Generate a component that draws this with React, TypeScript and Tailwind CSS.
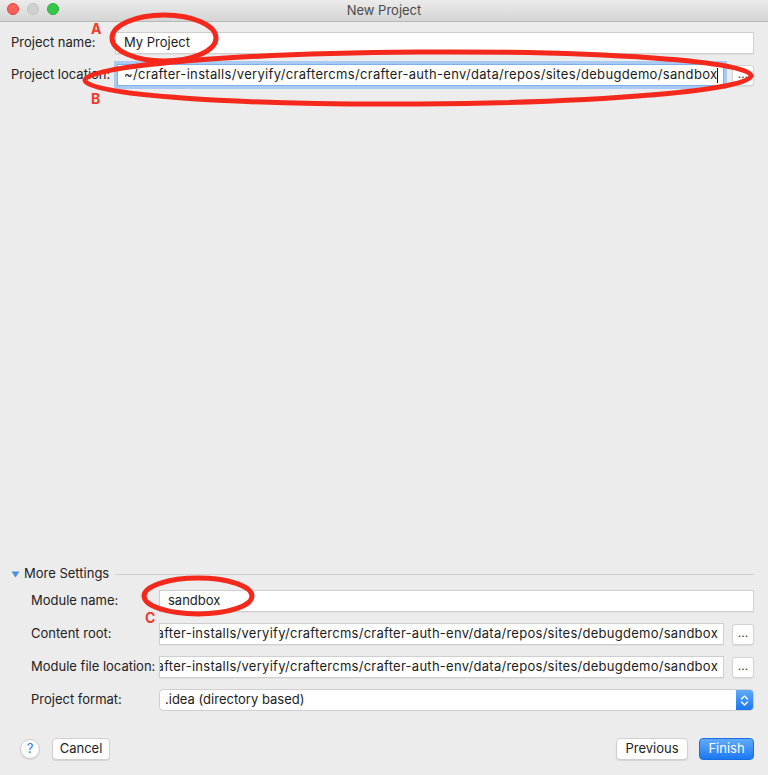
import React from 'react';

const font = { fontFamily: 'Inter, "Liberation Sans", Arial, sans-serif' };

const longPath = '~/crafter-installs/veryify/craftercms/crafter-auth-env/data/repos/sites/debugdemo/sandbox';

function Field({ value, clip = false }: { value: string; clip?: boolean }) {
  return (
    <div className="flex-1 min-w-0 h-[22px] bg-white border border-[#cfcfcf] shadow-[0_1px_0_rgba(0,0,0,0.04)] flex items-center overflow-hidden">
      <span className={`whitespace-nowrap text-[13px] text-[#1c1c1c] ${clip ? 'w-full flex justify-end pr-[5px] tracking-[0.27px]' : 'pl-[8px]'}`}>
        {value}
      </span>
    </div>
  );
}

function DotsButton() {
  return (
    <button className="ml-[8px] shrink-0 w-[22px] h-[21px] bg-white border border-[#d2d2d2] rounded-[3px] shadow-[0_1px_1px_rgba(0,0,0,0.08)] flex items-end justify-center pb-[5px] text-[12px] leading-none text-[#333]">
      ...
    </button>
  );
}

function Row({ label, children, width }: { label: string; children: React.ReactNode; width: string }) {
  return (
    <div className="flex items-center h-[22px]">
      <span className={`${width} shrink-0 whitespace-nowrap text-[13px] text-[#222]`}>{label}</span>
      {children}
    </div>
  );
}

export default function App() {
  return (
    <div className="relative w-[768px] h-[775px] bg-[#ececec] flex flex-col overflow-hidden" style={font}>
      {/* title bar */}
      <div className="relative h-[22px] shrink-0 bg-gradient-to-b from-[#ebebeb] to-[#d5d5d5] border-b border-[#b9b9b9] flex items-center justify-center">
        <div className="absolute left-[7px] top-[3px] flex gap-[8px]">
          <span className="w-[12px] h-[12px] rounded-full bg-[#fc605c] border border-[#e0443e]" />
          <span className="w-[12px] h-[12px] rounded-full bg-[#d0d0d0] border border-[#c2c2c2]" />
          <span className="w-[12px] h-[12px] rounded-full bg-[#34c84a] border border-[#2aac3a]" />
        </div>
        <span className="text-[13px] text-[#4a4a4a]">New Project</span>
      </div>

      {/* top fields */}
      <div className="pl-[11px] pr-[14px] pt-[10px] flex flex-col gap-[10px]">
        <Row label="Project name:" width="w-[104px]">
          <Field value="My Project" />
        </Row>
        <Row label="Project location:" width="w-[106px]">
          <div className="flex-1 min-w-0 h-[22px] bg-white border border-[#7eb0ea] ring-[3px] ring-[#a9cbf3] flex items-center overflow-hidden">
            <span className="pl-[6px] whitespace-nowrap text-[13px] tracking-[0.33px] text-[#1c1c1c]">{longPath}</span>
            <span className="w-px h-[15px] shrink-0 bg-[#111]" />
          </div>
          <DotsButton />
        </Row>
      </div>

      <div className="flex-1" />

      {/* more settings */}
      <div className="pl-[11px] pr-[14px] pb-[15px]">
        <div className="flex items-center h-[16px] mb-[8px]">
          <svg width="9" height="7" viewBox="0 0 9 7" className="mr-[4px]">
            <path d="M0.5 0.5 L8.5 0.5 L4.5 6.5 Z" fill="#4a8fd8" />
          </svg>
          <span className="text-[13px] text-[#222]">More Settings</span>
          <div className="flex-1 h-px bg-[#d0d0d0] ml-[6px]" />
        </div>

        <div className="pl-[20px] flex flex-col gap-[11px]">
          <Row label="Module name:" width="w-[128px]">
            <Field value="sandbox" />
          </Row>
          <Row label="Content root:" width="w-[128px]">
            <Field value={longPath} clip />
            <DotsButton />
          </Row>
          <Row label="Module file location:" width="w-[128px]">
            <Field value={longPath} clip />
            <DotsButton />
          </Row>
          <Row label="Project format:" width="w-[128px]">
            <div className="flex-1 h-[22px] bg-white border border-[#cfcfcf] rounded-[4px] flex items-center overflow-hidden">
              <span className="flex-1 pl-[5px] text-[13px] text-[#1c1c1c]">.idea (directory based)</span>
              <span className="w-[17px] h-full bg-gradient-to-b from-[#5eaafc] to-[#1a75f0] flex items-center justify-center">
                <svg width="9" height="13" viewBox="0 0 9 13">
                  <path d="M1.5 5 L4.5 2 L7.5 5 M1.5 8 L4.5 11 L7.5 8" fill="none" stroke="#fff" strokeWidth="1.4" strokeLinecap="round" strokeLinejoin="round" />
                </svg>
              </span>
            </div>
          </Row>
        </div>

        {/* footer */}
        <div className="flex items-center mt-[27px] h-[22px] pl-[9px]">
          <span className="w-[20px] h-[20px] rounded-full bg-white border border-[#cdcdcd] shadow-[0_1px_1px_rgba(0,0,0,0.1)] flex items-center justify-center text-[13px] text-[#2f7de0]">
            ?
          </span>
          <button className="ml-[12px] h-[22px] w-[58px] bg-white border border-[#d0d0d0] rounded-[4px] shadow-[0_1px_1px_rgba(0,0,0,0.1)] text-[13px] text-[#222]">
            Cancel
          </button>
          <div className="flex-1" />
          <button className="h-[22px] w-[72px] bg-white border border-[#d0d0d0] rounded-[4px] shadow-[0_1px_1px_rgba(0,0,0,0.1)] text-[13px] text-[#222]">
            Previous
          </button>
          <button className="ml-[11px] h-[22px] w-[55px] bg-gradient-to-b from-[#5faafc] to-[#1b78f2] border border-[#1a6fe0] rounded-[4px] text-[13px] text-white">
            Finish
          </button>
        </div>
      </div>

      {/* red annotations */}
      <svg className="absolute inset-0 pointer-events-none" width="768" height="775" viewBox="0 0 768 775">
        <ellipse cx="164" cy="38" rx="52" ry="23" fill="none" stroke="#f5281c" strokeWidth="5" />
        <ellipse cx="418" cy="78" rx="333" ry="26" fill="none" stroke="#f5281c" strokeWidth="5" transform="rotate(-0.4 418 78)" />
        <ellipse cx="198" cy="596" rx="54" ry="18" fill="none" stroke="#f5281c" strokeWidth="5" />
      </svg>
      <span className="absolute left-[91px] top-[22px] text-[14px] font-bold text-[#f03a2a] leading-none">A</span>
      <span className="absolute left-[91px] top-[92px] text-[14px] font-bold text-[#f03a2a] leading-none">B</span>
      <span className="absolute left-[145px] top-[611px] text-[14px] font-bold text-[#f03a2a] leading-none">C</span>
    </div>
  );
}
